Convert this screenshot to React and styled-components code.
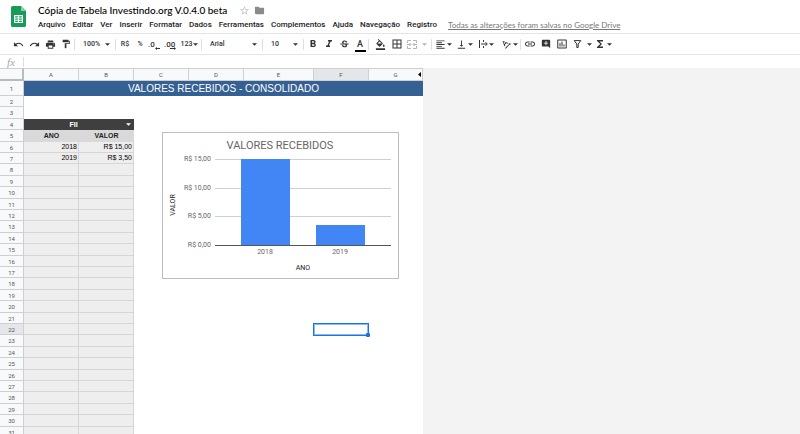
import React from "react";
import styled, { createGlobalStyle, css } from "styled-components";
import {
  MdUndo, MdRedo, MdPrint, MdFormatPaint, MdFormatBold, MdFormatItalic,
  MdStrikethroughS, MdFormatColorFill, MdBorderAll, MdFormatAlignLeft,
  MdVerticalAlignBottom, MdInsertLink, MdAddComment, MdInsertChartOutlined,
  MdFunctions, MdStarBorder, MdFolder, MdTextRotationAngleup,
} from "react-icons/md";

const GlobalStyle = createGlobalStyle`
  * { box-sizing: border-box; }
  body { margin: 0; background: #fff; font-family: Roboto, "Liberation Sans", sans-serif; }
  button, input, select { font: inherit; color: inherit; border: 0; padding: 0; margin: 0; background: none; }
  button { cursor: pointer; }
`;

const Page = styled.div`
  display: flex;
  flex-direction: column;
  height: 100vh;
  overflow: hidden;
`;

const Header = styled.header`
  display: flex;
  flex: none;
  height: 33px;
  padding-left: 11px;
  gap: 12px;
`;

const Logo = styled.svg`
  flex: none;
  width: 15px;
  height: 21px;
  margin-top: 6px;
`;

const HeaderText = styled.div`
  flex: 1;
  min-width: 0;
`;

const TitleRow = styled.div`
  display: flex;
  align-items: center;
  height: 13px;
  margin-top: 4px;
`;

const TitleInput = styled.input`
  width: 199px;
  height: 13px;
  font-family: Lato, sans-serif;
  font-size: 10px;
  font-weight: 500;
  line-height: 13px;
  color: #000;
`;

const TitleButton = styled.button`
  display: flex;
  align-items: center;
  justify-content: center;
  width: 15px;
  height: 12px;
  color: ${(p) => (p.$pale ? "#c4c4c4" : "#8a8a8a")};
`;

const MenuRow = styled.nav`
  display: flex;
  align-items: center;
  gap: 7px;
  height: 13px;
  margin-top: 1px;
  white-space: nowrap;
`;

const MenuButton = styled.button`
  font-size: 8px;
  font-weight: 500;
  line-height: 12px;
  color: #222;
`;

const SavedLink = styled.a`
  margin-left: 4px;
  font-family: Lato, sans-serif;
  font-size: 8px;
  line-height: 12px;
  color: #777;
`;

const Toolbar = styled.div`
  display: flex;
  align-items: center;
  flex: none;
  height: 22px;
  padding-left: 10px;
  border-top: 1px solid #e4e4e4;
  border-bottom: 1px solid #e4e4e4;
  color: #333;
  font-size: 7px;
  font-weight: 500;
`;

const Divider = styled.span`
  flex: none;
  width: 1px;
  height: 11px;
  background: #dedede;
`;

const ToolButton = styled.button`
  display: flex;
  flex: none;
  align-items: center;
  justify-content: center;
  gap: ${(p) => p.$gap || 1}px;
  width: ${(p) => p.$width || 16}px;
  height: 16px;
  color: ${(p) => (p.$pale ? "#b4b4b4" : "#333")};
`;

const Picker = styled.label`
  display: flex;
  flex: none;
  align-items: center;
  width: ${(p) => p.$width}px;
  height: 16px;
  padding: 0 5px 0 8px;
`;

const PickerSelect = styled.select`
  appearance: none;
  flex: 1;
  min-width: 0;
  outline: 0;
`;

const TextColor = styled.span`
  width: 11px;
  margin-top: 2px;
  border-bottom: 2px solid #000;
  font-size: 9px;
  line-height: 11px;
  text-align: center;
`;

const CaretIcon = styled.svg`
  flex: none;
  width: 5px;
  height: 3px;
`;

const FormulaBar = styled.label`
  display: flex;
  align-items: center;
  flex: none;
  height: 13px;
  padding-left: 7px;
  color: #a8a8a8;
  font: italic 11px/12px "Liberation Serif", serif;
`;

const FormulaInput = styled.input`
  flex: 1;
  height: 10px;
  margin-left: 8px;
  padding-left: 4px;
  border-left: 1px solid #ddd;
  outline: 0;
`;

const SheetArea = styled.main`
  position: relative;
  flex: 1;
  min-height: 0;
  overflow: hidden;
  background: #f3f3f3;
`;

const Table = styled.table`
  table-layout: fixed;
  width: 423px;
  border-collapse: separate;
  border-spacing: 0;
  background: #fff;
  font-family: "Liberation Sans", Arial, sans-serif;
  font-size: 7px;
`;

const Col = styled.col`
  width: ${(p) => p.$width}px;
`;

const HeadRow = styled.tr`
  height: 13px;
`;

const Row = styled.tr`
  height: 11px;
  &:nth-child(5n + 3), &:nth-child(5n) { height: 12px; }
  &:first-child { height: 15px; }
`;

const headCell = css`
  padding: 0;
  background: ${(p) => (p.$active ? "#e4e6ea" : "#f8f9fa")};
  border-right: 1px solid #cfcfcf;
  border-bottom: 1px solid #cfcfcf;
  color: #555;
  font-family: Roboto, sans-serif;
  font-size: 6px;
  font-weight: 400;
  line-height: 9px;
  text-align: center;
`;

const ColHead = styled.th`
  ${headCell}
  border-top: 1px solid #cfcfcf;
`;

const HeadLabel = styled.span`
  display: grid;
  grid-template-columns: 1fr auto 1fr;
  align-items: center;
`;

const HeadLetter = styled.span`
  grid-column: 2;
`;

const HiddenMark = styled.svg`
  justify-self: end;
  width: 3px;
  height: 5px;
  margin-right: 1px;
`;

const Corner = styled.td`
  padding: 0;
  background: #f8f9fa;
  border-top: 1px solid #cfcfcf;
  border-right: 2px solid #bbb;
  border-bottom: 2px solid #bbb;
`;

const RowHead = styled.th`
  ${headCell}
`;

const Banner = styled.td`
  padding: 0;
  background: #356094;
  color: #fff;
  font-size: 10px;
  line-height: 13px;
  text-align: center;
`;

const GroupHead = styled.th`
  padding: 0;
  background: #3f3f3f;
  color: #fff;
  line-height: 10px;
`;

const GroupLabel = styled.span`
  display: flex;
  align-items: center;
  gap: 3px;
  padding-right: 3px;
`;

const GroupName = styled.span`
  flex: 1;
`;

const FieldHead = styled.th`
  padding: 0;
  background: #d9d9d9;
  color: #222;
  line-height: 10px;
`;

const Cell = styled.td`
  position: relative;
  padding: 0 1px 0 0;
  line-height: 10px;
  text-align: right;
  color: #000;
  ${(p) => p.$shaded && css`
    background: #eee;
    border-right: 1px solid #d6d6d6;
    border-bottom: 1px solid #d6d6d6;
  `}
`;

const Selection = styled.span`
  position: absolute;
  inset: -1px 0 -1px -1px;
  border: 1px solid #1a73e8;
  outline: 1px solid #8db9f3;
  outline-offset: -2px;
  &::after {
    content: "";
    position: absolute;
    right: -2px;
    bottom: -2px;
    width: 4px;
    height: 4px;
    border-radius: 1px;
    background: #1a73e8;
  }
`;

const ChartCard = styled.figure`
  position: absolute;
  top: 64px;
  left: 162px;
  width: 237px;
  height: 147px;
  margin: 0;
  border: 1px solid #bdbdbd;
  background: #fff;
`;

const ChartSvg = styled.svg`
  display: block;
  font-family: Roboto, sans-serif;
  font-size: 7px;
  fill: #666;
`;

const Caret = () => (
  <CaretIcon viewBox="0 0 6 3" aria-hidden="true"><path d="M0 0h6L3 3z" fill="currentColor" /></CaretIcon>
);

const SheetsLogo = () => (
  <Logo viewBox="0 0 15 21" role="img" aria-label="Planilhas">
    <path d="M1.5 0H10l5 5v14.5a1.5 1.5 0 0 1-1.5 1.5h-12A1.5 1.5 0 0 1 0 19.500V1.500A1.500 1.500 0 0 1 1.500 0z" fill="#159d58" />
    <path d="M10 0l5 5h-5z" fill="#87ceac" />
    <path d="M3 9h9v8H3zM4.200 10.200v1.400h2.700v-1.400zm3.900 0v1.400h2.700v-1.400zM4.200 12.500v1.300h2.700v-1.300zm3.900 0v1.300h2.700v-1.300zM4.200 14.700v1.300h2.700v-1.300zm3.900 0v1.300h2.700v-1.300z" fill="#fff" fillRule="evenodd" />
  </Logo>
);

const DecimalIcon = ({ more }) => (
  <svg width="12" height="11" viewBox="0 0 12 11" fill="currentColor" aria-hidden="true">
    <text x="0" y="8" fontSize="8">{more ? ".00" : ".0"}</text>
    <path d={more ? "M6 9h4V8l2 1.500L10 11v-1H6z" : "M12 9H9V8L7 9.500 9 11v-1h3z"} />
  </svg>
);

const MergeIcon = () => (
  <svg width="10" height="9" viewBox="0 0 10 9" fill="none" stroke="currentColor" aria-hidden="true">
    <path d="M.5 3V.5H4M6 .5h3.500V3M.5 6v2.500H4M6 8.500h3.500V6M0 4.500h3.500M10 4.500H6.500M2.500 3L4 4.500 2.500 6M7.500 3L6 4.500 7.500 6" />
  </svg>
);

const WrapIcon = () => (
  <svg width="9" height="10" viewBox="0 0 9 10" fill="none" stroke="currentColor" aria-hidden="true">
    <path d="M.5 1v8M4.500 1v2M4.500 7v2M2 5h6M6.500 3.200L8.300 5 6.500 6.800" />
  </svg>
);

const FunnelIcon = () => (
  <svg width="9" height="8" viewBox="0 0 9 8" fill="none" stroke="currentColor" aria-hidden="true">
    <path d="M1.200.600h6.600L5.200 4v3.500H3.800V4z" />
  </svg>
);

const MENUS = ["Arquivo", "Editar", "Ver", "Inserir", "Formatar", "Dados", "Ferramentas", "Complementos", "Ajuda", "Navegação", "Registro"];
const COLUMNS = [
  ["A", 55], ["B", 55], ["C", 55], ["D", 55], ["E", 70], ["F", 55], ["G", 54],
];
const RECORDS = { 6: ["2018", "R$ 15,00"], 7: ["2019", "R$ 3,50"] };
const TICKS = [["R$ 15,00", 26], ["R$ 10,00", 55], ["R$ 5,00", 83], ["R$ 0,00", 112]];

const SheetRow = ({ number }) => {
  const record = RECORDS[number];
  const shaded = number > 5;
  return (
    <Row>
      <RowHead scope="row" $active={number === 22}>{number}</RowHead>
      {number === 1 && <Banner colSpan={7}>VALORES RECEBIDOS - CONSOLIDADO</Banner>}
      {number === 4 && (
        <GroupHead colSpan={2}><GroupLabel><GroupName>FII</GroupName><Caret /></GroupLabel></GroupHead>
      )}
      {number === 5 && <><FieldHead>ANO</FieldHead><FieldHead>VALOR</FieldHead></>}
      {(number === 2 || number === 3 || shaded) && (
        <><Cell $shaded={shaded}>{record?.[0]}</Cell><Cell $shaded={shaded}>{record?.[1]}</Cell></>
      )}
      {number > 1 && COLUMNS.slice(2).map(([name]) => (
        <Cell key={name}>{number === 22 && name === "F" && <Selection />}</Cell>
      ))}
    </Row>
  );
};

const Chart = () => (
  <ChartCard>
    <ChartSvg width="235" height="145" viewBox="0 0 235 145" role="img" aria-label="Valores recebidos por ano">
      <text x="117" y="16" textAnchor="middle" fontSize="11">VALORES RECEBIDOS</text>
      {TICKS.map(([label, y]) => (
        <g key={label}>
          <text x="48" y={y + 2} textAnchor="end">{label}</text>
          <path d={`M52 ${y + 0.5}H228`} stroke={y === 112 ? "#555" : "#d0d0d0"} />
        </g>
      ))}
      <path d="M78 26h49v86H78zM153 92h49v20h-49z" fill="#4285f4" />
      <text x="102" y="121" textAnchor="middle">2018</text>
      <text x="177" y="121" textAnchor="middle">2019</text>
      <text x="140" y="137" textAnchor="middle" fill="#222">ANO</text>
      <text transform="translate(12 72) rotate(-90)" textAnchor="middle" fill="#222">VALOR</text>
    </ChartSvg>
  </ChartCard>
);

export default function App() {
  return (
    <Page>
      <GlobalStyle />
      <Header>
        <SheetsLogo />
        <HeaderText>
          <TitleRow>
            <TitleInput aria-label="Título" defaultValue="Cópia de Tabela Investindo.org V.0.4.0 beta" />
            <TitleButton $pale aria-label="Marcar com estrela"><MdStarBorder size={11} /></TitleButton>
            <TitleButton aria-label="Mover para pasta"><MdFolder size={11} /></TitleButton>
          </TitleRow>
          <MenuRow>
            {MENUS.map((name) => <MenuButton key={name}>{name}</MenuButton>)}
            <SavedLink href="#drive">Todas as alterações foram salvas no Google Drive</SavedLink>
          </MenuRow>
        </HeaderText>
      </Header>
      <Toolbar role="toolbar" aria-label="Formatação">
        <ToolButton aria-label="Desfazer"><MdUndo size={11} /></ToolButton>
        <ToolButton aria-label="Refazer"><MdRedo size={11} /></ToolButton>
        <ToolButton aria-label="Imprimir"><MdPrint size={11} /></ToolButton>
        <ToolButton aria-label="Pintar formatação"><MdFormatPaint size={10} /></ToolButton>
        <Divider />
        <Picker $width={40}><PickerSelect aria-label="Zoom"><option>100%</option></PickerSelect><Caret /></Picker>
        <Divider />
        <ToolButton $width={18}>R$</ToolButton>
        <ToolButton $width={12}>%</ToolButton>
        <ToolButton aria-label="Diminuir casas decimais"><DecimalIcon /></ToolButton>
        <ToolButton aria-label="Aumentar casas decimais"><DecimalIcon more /></ToolButton>
        <ToolButton $width={23}>123<Caret /></ToolButton>
        <Divider />
        <Picker $width={60}><PickerSelect aria-label="Fonte"><option>Arial</option></PickerSelect><Caret /></Picker>
        <Divider />
        <Picker $width={40}><PickerSelect aria-label="Tamanho"><option>10</option></PickerSelect><Caret /></Picker>
        <Divider />
        <ToolButton $width={18} aria-label="Negrito"><MdFormatBold size={12} /></ToolButton>
        <ToolButton $width={14} aria-label="Itálico"><MdFormatItalic size={12} /></ToolButton>
        <ToolButton aria-label="Tachado"><MdStrikethroughS size={11} /></ToolButton>
        <ToolButton aria-label="Cor do texto"><TextColor>A</TextColor></ToolButton>
        <Divider />
        <ToolButton $width={22} aria-label="Cor de preenchimento"><MdFormatColorFill size={11} /></ToolButton>
        <ToolButton $width={12} aria-label="Bordas"><MdBorderAll size={12} /></ToolButton>
        <ToolButton $width={28} $pale $gap={5} aria-label="Mesclar células"><MergeIcon /><Caret /></ToolButton>
        <Divider />
        <ToolButton $width={22} aria-label="Alinhamento horizontal"><MdFormatAlignLeft size={11} /><Caret /></ToolButton>
        <ToolButton $width={20} aria-label="Alinhamento vertical"><MdVerticalAlignBottom size={11} /><Caret /></ToolButton>
        <ToolButton $width={24} aria-label="Ajuste de texto"><WrapIcon /><Caret /></ToolButton>
        <ToolButton $width={22} aria-label="Rotação de texto"><MdTextRotationAngleup size={11} /><Caret /></ToolButton>
        <Divider />
        <ToolButton $width={18} aria-label="Inserir link"><MdInsertLink size={12} /></ToolButton>
        <ToolButton $width={14} aria-label="Inserir comentário"><MdAddComment size={10} /></ToolButton>
        <ToolButton $width={18} aria-label="Inserir gráfico"><MdInsertChartOutlined size={12} /></ToolButton>
        <ToolButton $width={22} $gap={5} aria-label="Filtro"><FunnelIcon /><Caret /></ToolButton>
        <ToolButton $width={20} aria-label="Funções"><MdFunctions size={12} /><Caret /></ToolButton>
      </Toolbar>
      <FormulaBar>fx<FormulaInput aria-label="Barra de fórmulas" /></FormulaBar>
      <SheetArea>
        <Table>
          <colgroup>
            <Col $width={24} />
            {COLUMNS.map(([name, width]) => <Col key={name} $width={width} />)}
          </colgroup>
          <thead>
            <HeadRow>
              <Corner />
              {COLUMNS.map(([name]) => (
                <ColHead key={name} scope="col" $active={name === "F"}>
                  {name === "G"
                    ? <HeadLabel><HeadLetter>G</HeadLetter><HiddenMark viewBox="0 0 3 5"><path d="M3 0v5L0 2.500z" /></HiddenMark></HeadLabel>
                    : name}
                </ColHead>
              ))}
            </HeadRow>
          </thead>
          <tbody>
            {Array.from({ length: 31 }, (_, i) => <SheetRow key={i} number={i + 1} />)}
          </tbody>
        </Table>
        <Chart />
      </SheetArea>
    </Page>
  );
}
